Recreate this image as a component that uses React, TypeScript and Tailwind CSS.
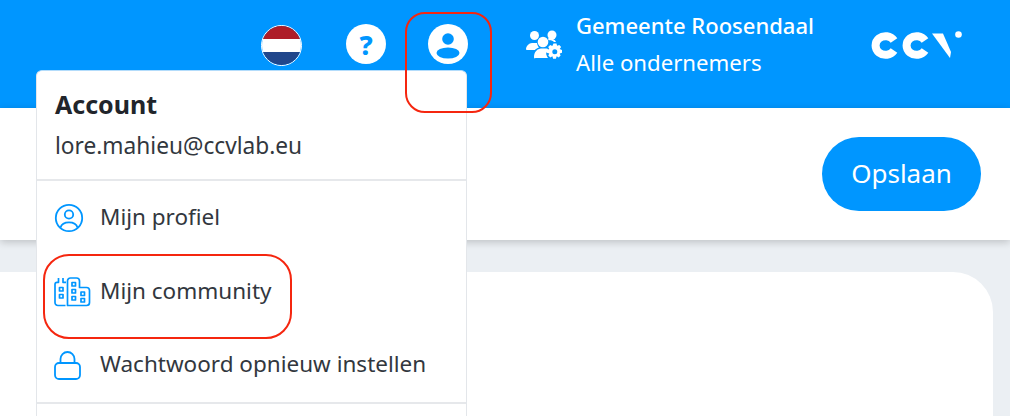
const font = { fontFamily: '"Noto Sans", sans-serif' }

function GroupIcon() {
  return (
    <svg viewBox="0 0 36 32" className="w-[36px] h-[32px]" fill="white">
      <circle cx="8.500" cy="6.500" r="4.500" />
      <circle cx="26" cy="6" r="4.500" />
      <circle cx="17" cy="13" r="5.300" />
      <path d="M0 20.500c0-3.500 3-6.500 6-6.500h5c.3 2 1.200 3.500 2 4.500-2 .8-3.500 1.500-4 2.500H1c-.6 0-1-.2-1-.5z" />
      <path d="M8 28c0-5 3.500-8.500 7-8.500h4.500c1.500 0 2.500.3 3 .6-1 .9-1.500 2-1.500 2.900-1 .8-1 2-.5 3 .2.9.7 2 1.500 3H9.500C8.500 30 8 29 8 28z" />
      <path d="M22 9.500c3-.6 7 .7 8 3.500h-2c-1.200-1.500-3.500-2-5.500-1.700z" />
      <path d="M27.500 14.500h3l.6 2.300 2.200-.9 1.800 2.200-1.400 1.800 2.300 1.100v2.800l-2.300.6.900 2.200-1.900 2-2-1.300-.8 2.400h-2.800l-.7-2.400-2.100 1.300-2-2 1-2.200-2.400-.7v-2.700l2.400-.9-1.100-2.100 2-2.100 2.100 1z" />
      <circle cx="28.800" cy="22.800" r="2.500" fill="#0096ff" />
    </svg>
  )
}

function Logo() {
  return (
    <svg viewBox="0 0 92 27" className="w-[92px] h-[27px] overflow-visible">
      <g fill="none" stroke="white" strokeWidth="8">
        <path d="M23 8.500A10 9.300 0 1 0 23 18.500" />
        <path d="M54 8.500A10 9.300 0 1 0 54 18.500" />
      </g>
      <path d="M61 1.500h11l8 18.500-1 6z" fill="white" />
      <circle cx="87.500" cy="2.500" r="3.300" fill="white" />
    </svg>
  )
}

function ProfileIcon() {
  return (
    <svg viewBox="0 0 30 30" className="w-[30px] h-[30px]" fill="none" stroke="#0096ff" strokeWidth="1.800">
      <circle cx="15" cy="15" r="13.200" />
      <circle cx="15" cy="11.500" r="4.200" />
      <path d="M6.500 24.500c1-3.500 4.500-5.200 8.500-5.200s7.500 1.700 8.500 5.200" />
    </svg>
  )
}

function CommunityIcon() {
  return (
    <svg viewBox="0 0 37 30" className="w-[37px] h-[30px]" fill="none" stroke="#0096ff" strokeWidth="1.700" strokeLinejoin="round">
      <path d="M11.500 28.500H4c-1.800 0-3-1.200-3-3V7.500c0-1.200.8-2.200 2-2.200h1.500V1M9 1v4.300h3" />
      <path d="M13.500 28.500V4c0-1.800 1.200-3 3-3h6c1.800 0 3 1.200 3 3v6.500h7c1.800 0 3 1.200 3 3v12c0 1.800-1.200 3-3 3z" />
      <rect x="5.500" y="10.500" width="3.500" height="3.500" />
      <rect x="5.500" y="17.500" width="3.500" height="3.500" />
      <rect x="18" y="5.500" width="3.500" height="3.500" />
      <rect x="18" y="12.500" width="3.500" height="3.500" />
      <rect x="18" y="19.500" width="3.500" height="3.500" />
      <rect x="27" y="15" width="3.500" height="3.500" />
      <rect x="27" y="21.500" width="3.500" height="3.500" />
    </svg>
  )
}

function LockIcon() {
  return (
    <svg viewBox="0 0 27 29" className="w-[27px] h-[29px]" fill="none" stroke="#0096ff" strokeWidth="1.800">
      <path d="M6.500 12V8a7 7 0 0 1 14 0v4" />
      <rect x="1" y="12" width="25" height="16" rx="4" />
    </svg>
  )
}

function MenuRow({ icon, label }: { icon: React.ReactNode; label: string }) {
  return (
    <div className="flex items-center h-[74px] pl-[17px]">
      <div className="w-[46px] flex shrink-0">{icon}</div>
      <span className="text-[22.500px] leading-[30px] pb-[2px] text-[#32373e]">{label}</span>
    </div>
  )
}

export default function App() {
  return (
    <div className="relative w-[1010px] h-[416px] overflow-hidden bg-[#ebeff3]" style={font}>
      <header className="h-[108px] bg-[#0096ff] flex items-start pl-[261px] pt-[24px]">
        <div className="mt-[1px] w-[41px] h-[41px] rounded-full border border-white overflow-hidden flex flex-col shrink-0">
          <div className="flex-1 bg-[#ae1c28]" />
          <div className="flex-1 bg-white" />
          <div className="flex-1 bg-[#21468b]" />
        </div>
        <div className="ml-[44px] w-10 h-10 rounded-full bg-white flex items-center justify-center text-[#0096ff] font-extrabold text-[27px] leading-none shrink-0">?</div>
        <div className="ml-[42px] w-10 h-10 rounded-full bg-white overflow-hidden shrink-0">
          <svg viewBox="0 0 40 40" className="w-10 h-10" fill="#0096ff">
            <circle cx="20" cy="15" r="5.800" />
            <ellipse cx="20" cy="29" rx="11.500" ry="5.500" />
          </svg>
        </div>
        <div className="ml-[58px] mt-[5px] shrink-0"><GroupIcon /></div>
        <div className="ml-[14px] -mt-[18px] w-[237px] shrink-0 text-white">
          <div className="text-[22px] font-medium leading-[38px] whitespace-nowrap">Gemeente Roosendaal</div>
          <div className="text-[22.200px] leading-[38px] whitespace-nowrap">Alle ondernemers</div>
        </div>
        <div className="ml-[58px] mt-[8px] shrink-0"><Logo /></div>
      </header>

      <div className="h-[132px] bg-white shadow-[0_2px_8px_rgba(0,0,0,0.2)] relative flex justify-end items-start pt-[29px] pr-[29px]">
        <button className="h-[74px] w-[159px] rounded-full bg-[#0096ff] text-white text-[26px] leading-[34px] pb-[2px]">Opslaan</button>
      </div>

      <div className="mt-[32px] mr-[17px] h-[200px] bg-white rounded-tr-[40px]" />

      <div className="absolute left-[36px] top-[70px] w-[431px] h-[400px] bg-white border border-[#e3e6ea] border-t-[#b3dcfb] rounded-t-[6px]">
        <div className="h-[110px] pl-[18px] pt-[16px] border-b-2 border-[#e6e8eb]">
          <div className="text-[25px] font-bold leading-[34px] text-[#21252b]">Account</div>
          <div className="text-[22.700px] leading-[36px] mt-[7px] text-[#32373e]">lore.mahieu@ccvlab.eu</div>
        </div>
        <MenuRow icon={<ProfileIcon />} label="Mijn profiel" />
        <MenuRow icon={<CommunityIcon />} label="Mijn community" />
        <div className="-mt-[1px]"><MenuRow icon={<LockIcon />} label="Wachtwoord opnieuw instellen" /></div>
        <div className="border-t-2 border-[#e6e8eb]" />
      </div>

      <div className="absolute left-[405px] top-[12px] w-[87px] h-[101px] border-2 border-[#f5260f] rounded-[20px]" />
      <div className="absolute left-[43px] top-[254px] w-[249px] h-[85px] border-2 border-[#f5260f] rounded-[26px]" />
    </div>
  )
}
